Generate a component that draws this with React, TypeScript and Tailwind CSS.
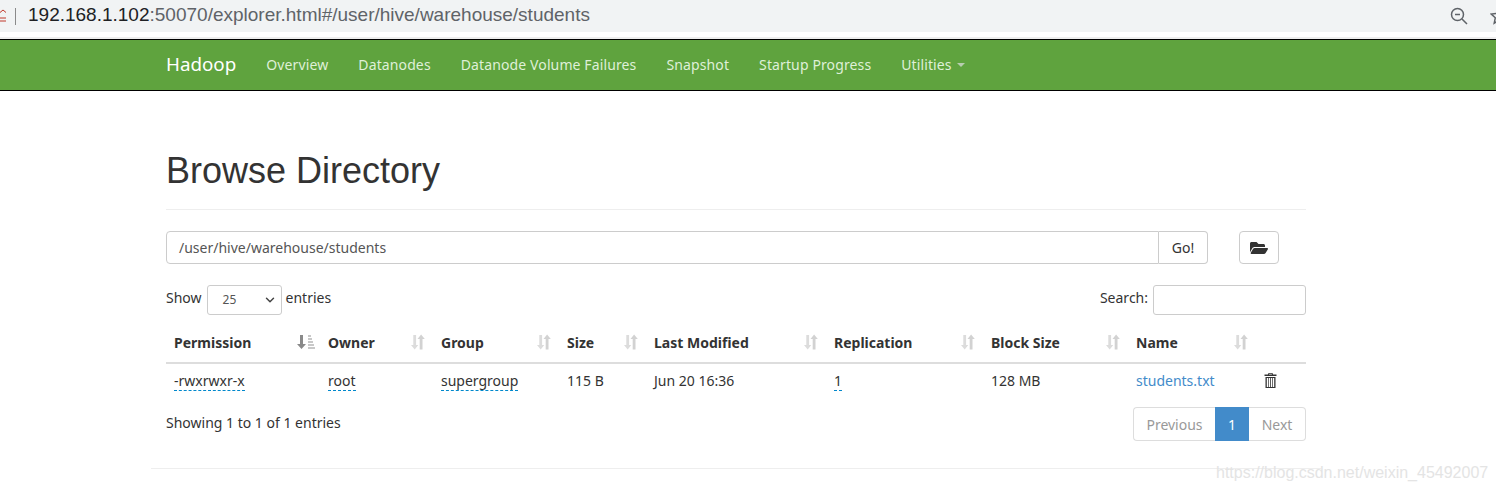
import { FaFolderOpen } from "react-icons/fa";
import { ChevronDown } from "lucide-react";

const NAV = ["Overview", "Datanodes", "Datanode Volume Failures", "Snapshot", "Startup Progress"];

const COLUMNS = [
  { label: "Permission", width: 154, active: true },
  { label: "Owner", width: 113 },
  { label: "Group", width: 126 },
  { label: "Size", width: 87 },
  { label: "Last Modified", width: 180 },
  { label: "Replication", width: 157 },
  { label: "Block Size", width: 145 },
  { label: "Name", width: 128 },
];

function SortIcon({ active }: { active?: boolean }) {
  if (active) {
    return (
      <svg width="18" height="16" viewBox="0 0 18 16" className="absolute right-[5px] top-[12px]">
        <path d="M3 1h3v9h3l-4.500 5L0 10h3z" fill="#8a8a8a" />
        <rect x="11" y="1" width="3" height="2" fill="#c8c8c8" />
        <rect x="11" y="4" width="4" height="2" fill="#c8c8c8" />
        <rect x="11" y="7" width="5" height="2" fill="#c8c8c8" />
        <rect x="11" y="10" width="6" height="2" fill="#c8c8c8" />
        <rect x="11" y="13" width="7" height="2" fill="#c8c8c8" />
      </svg>
    );
  }
  return (
    <svg width="15" height="16" viewBox="0 0 15 16" className="absolute right-[7px] top-[12px]">
      <path d="M2.300 1h2.800v10h2.200L3.700 15.500 0 11h2.300z" fill="#dcdcdc" />
      <path d="M11.500 15.500H8.700V5H6.500l3.600-4.500L13.800 5h-2.300z" fill="#d2d2d2" />
    </svg>
  );
}

function TrashIcon() {
  return (
    <svg width="13" height="15" viewBox="0 0 13 15" className="block">
      <path d="M4.500 0h4l.5 1.500h3.500V3H.5V1.500H4zM5 1.500h3L7.800.8H5.200z" fill="#333" fillRule="evenodd" />
      <path
        fillRule="evenodd"
        d="M1.500 4h10v11h-10zM2.800 5V14H4.200V5zM4.900 5V14H6.100V5zM6.900 5V14H8.100V5zM8.800 5V14H10.200V5z"
        fill="#333"
      />
    </svg>
  );
}

function Tip({ children }: { children: string }) {
  return <span className="border-b border-dashed border-[#0088cc]">{children}</span>;
}

export default function App() {
  return (
    <div className="relative h-[489px] w-[1496px] overflow-hidden bg-white font-['Noto_Sans','Open_Sans',sans-serif] text-[14px] text-[#333]">
      {/* browser bar */}
      <div className="flex h-[32px] items-center overflow-hidden bg-[#f1f3f4]">
        <svg width="6" height="14" viewBox="0 0 6 14" className="shrink-0">
          <path d="M-3 6l6-5 3 2.500M0 9h6M0 12h6" stroke="#c0392b" fill="none" />
        </svg>
        <div className="ml-[9px] h-[17px] w-px bg-[#8a8a8a]" />
        <div className="ml-[12px] -mt-[2px] font-['Liberation_Sans',sans-serif] text-[19px] text-[#5f6368]">
          <span className="text-[#202124]">192.168.1.102</span>:50070/explorer.html#/user/hive/warehouse/students
        </div>
        <div className="ml-auto mr-[-12px] flex items-center gap-[22px]">
          <svg width="18" height="18" viewBox="0 0 18 18" fill="none" stroke="#5f6368" strokeWidth="1.500">
            <circle cx="7.500" cy="7.500" r="6" />
            <path d="M12 12l5 5M5 7.500h5" />
          </svg>
          <svg width="18" height="18" viewBox="0 0 18 18" fill="none" stroke="#5f6368" strokeWidth="1.500">
            <path d="M9 1.500l2.300 5 5.400.6-4 3.700 1.100 5.400L9 13.500l-4.800 2.700 1.100-5.400-4-3.700 5.400-.6z" />
          </svg>
        </div>
      </div>
      <div className="h-[5px] bg-white" />
      <div className="h-[2px] bg-[#eeeeee]" />
      {/* navbar */}
      <div className="flex h-[52px] items-center border-y border-black bg-[#5fa33e] pb-[2px] pl-[166px]">
        <span className="mr-[30px] text-[18.800px] text-white">Hadoop</span>
        <div className="flex items-center gap-[30px] tracking-[0.12px] text-[#dff0d8]">
          {NAV.map(item => (
            <span key={item}>{item}</span>
          ))}
          <span className="flex items-center">
            Utilities
            <span className="ml-[5px] mt-[2px] border-x-[4px] border-t-[4px] border-x-transparent border-t-[#b8cdb0]" />
          </span>
        </div>
      </div>
      {/* page */}
      <div className="ml-[151px] w-[1170px]">
        <div className="w-[1170px] px-[15px]">
          <div className="w-[1140px]">
            <div className="border-b border-[#eeeeee] pb-[18px] pt-[60px]">
              <h1 className="font-['Liberation_Sans',sans-serif] text-[36px] leading-[40px] text-[#333]">Browse Directory</h1>
            </div>
            <div className="mt-[21px] flex h-[33px]">
              <div className="flex w-[1042px]">
                <div className="flex flex-1 items-center rounded-l border border-[#cccccc] pl-[12px] text-[#555]">
                  /user/hive/warehouse/students
                </div>
                <div className="flex w-[49px] items-center justify-center rounded-r border border-l-0 border-[#cccccc]">Go!</div>
              </div>
              <div className="ml-[31px] flex w-[40px] items-center justify-center rounded border border-[#cccccc]">
                <FaFolderOpen size={18} color="#333" />
              </div>
            </div>
            <div className="mt-[21px] flex h-[30px] items-center justify-between">
              <div className="flex items-center">
                <span className="-mt-[6px]">Show</span>
                <div className="ml-[5px] mr-[4px] flex h-[30px] w-[75px] items-center justify-between rounded-[3px] border border-[#cccccc] pl-[15px] pr-[4px] text-[12px] text-[#555]">
                  25
                  <ChevronDown size={14} strokeWidth={2.500} color="#444" />
                </div>
                <span className="-mt-[6px]">entries</span>
              </div>
              <div className="flex items-center">
                <span className="-mt-[6px]">Search:</span>
                <div className="ml-[5px] h-[30px] w-[153px] rounded-[3px] border border-[#cccccc]" />
              </div>
            </div>
            <table className="mt-[7px] w-[1140px] table-fixed border-collapse">
              <colgroup>
                {COLUMNS.map(c => (
                  <col key={c.label} style={{ width: c.width }} />
                ))}
                <col style={{ width: 50 }} />
              </colgroup>
              <thead>
                <tr className="h-[41px] border-b-2 border-[#dddddd]">
                  {COLUMNS.map(c => (
                    <th key={c.label} className="relative px-[8px] text-left font-bold">
                      {c.label}
                      <SortIcon active={c.active} />
                    </th>
                  ))}
                  <th />
                </tr>
              </thead>
              <tbody>
                <tr className="h-[38px]">
                  <td className="px-[8px] pb-[4px]"><Tip>-rwxrwxr-x</Tip></td>
                  <td className="px-[8px] pb-[4px]"><Tip>root</Tip></td>
                  <td className="px-[8px] pb-[4px]"><Tip>supergroup</Tip></td>
                  <td className="px-[8px] pb-[4px]">115 B</td>
                  <td className="px-[8px] pb-[4px]">Jun 20 16:36</td>
                  <td className="px-[8px] pb-[4px]"><Tip>1</Tip></td>
                  <td className="px-[8px] pb-[4px]">128 MB</td>
                  <td className="px-[8px] pb-[4px] text-[#428bca]">students.txt</td>
                  <td className="px-[8px] pb-[4px]"><TrashIcon /></td>
                </tr>
              </tbody>
            </table>
            <div className="mt-[6px] flex items-start justify-between">
              <div className="pt-[5px]">Showing 1 to 1 of 1 entries</div>
              <div className="flex h-[34px] text-[#999]">
                <div className="flex w-[82px] items-center justify-center rounded-l border border-r-0 border-[#dddddd]">Previous</div>
                <div className="flex w-[34px] items-center justify-center bg-[#428bca] text-white">1</div>
                <div className="flex w-[57px] items-center justify-center rounded-r border border-l-0 border-[#dddddd]">Next</div>
              </div>
            </div>
          </div>
        </div>
        <div className="mt-[27px] border-t border-[#eeeeee]" />
      </div>
      <div className="absolute left-[1216px] top-[461px] font-['Liberation_Sans',sans-serif] text-[16px] text-[#e4e4e4]">
        https://blog.csdn.net/weixin_45492007
      </div>
    </div>
  );
}
